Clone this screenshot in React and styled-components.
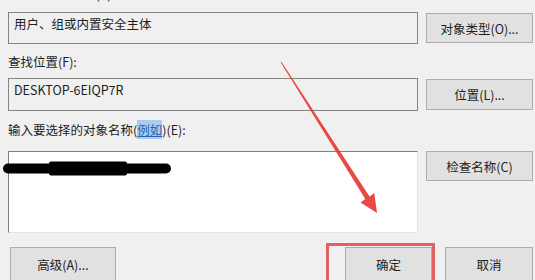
import React from "react";
import styled, { createGlobalStyle } from "styled-components";

const Global = createGlobalStyle`
  html, body { margin: 0; padding: 0; background: #f0f0f0; }
  body { width: 535px; height: 280px; overflow: hidden;
    font-family: "Noto Sans CJK SC", "Noto Sans", "Liberation Sans", sans-serif; }
`;

const Page = styled.div`
  position: relative;
  width: 535px;
  height: 280px;
  overflow: hidden;
  padding-left: 8px;
  box-sizing: border-box;
  color: #1e1e1e;
  font-size: 12.5px;
`;

const Label = styled.div`
  height: 16px;
  line-height: 16px;
  margin-top: ${(p) => p.$mt}px;
  white-space: nowrap;
`;

const Row = styled.div`
  display: grid;
  grid-template-columns: 410px 107px;
  column-gap: 8px;
  align-items: ${(p) => p.$align || "center"};
  margin-top: ${(p) => p.$mt}px;
`;

const Field = styled.div`
  box-sizing: border-box;
  height: ${(p) => p.$h}px;
  border: 1px solid #858585;
  background: #f0f0f0;
  padding: 3px 5px;
  line-height: 16px;
`;

const ListBox = styled.div`
  position: relative;
  box-sizing: border-box;
  height: 82px;
  background: #ffffff;
  border-top: 1px solid #808080;
  border-left: 1px solid #808080;
  border-right: 1px solid #e2e2e2;
  border-bottom: 1px solid #e2e2e2;
`;

const Button = styled.div`
  box-sizing: border-box;
  width: ${(p) => p.$w || 107}px;
  height: ${(p) => p.$h || 30}px;
  background: #e1e1e1;
  border: 1px solid #adadad;
  display: flex;
  align-items: ${(p) => (p.$top ? "flex-start" : "center")};
  padding-top: ${(p) => (p.$top ? 7 : 0)}px;
  justify-content: center;
  white-space: nowrap;
`;

const Link = styled.span`
  background: #a9cdee;
  color: #2a63b0;
  text-decoration: underline;
`;

const Footer = styled.div`
  display: flex;
  align-items: flex-start;
  margin-top: 14px;
  padding-left: 2px;
`;

const FooterRight = styled.div`
  margin-left: auto;
  display: flex;
  gap: 13px;
  padding-right: 2px;
`;

const Redaction = styled.svg`
  position: absolute;
  left: -8px;
  top: 9px;
`;

const Overlay = styled.svg`
  position: absolute;
  left: 0;
  top: 0;
  pointer-events: none;
`;

const Highlight = styled.div`
  position: absolute;
  left: 326px;
  top: 243px;
  width: 109px;
  height: 40px;
  box-sizing: border-box;
  border: 3px solid rgba(222, 70, 70, 0.85);
`;

export default function App() {
  return (
    <>
      <Global />
      <Page>
        <Label $mt={-14}>选择此对象类型(S):</Label>
        <Row $mt={10}>
          <Field $h={32}>用户、组或内置安全主体</Field>
          <Button>对象类型(O)...</Button>
        </Row>
        <Label $mt={10}>查找位置(F):</Label>
        <Row $mt={8}>
          <Field $h={33}>DESKTOP-6EIQP7R</Field>
          <Button $h={31}>位置(L)...</Button>
        </Row>
        <Label $mt={11}>
          输入要选择的对象名称(<Link>例如</Link>)(E):
        </Label>
        <Row $mt={13} $align="start">
          <ListBox>
            <Redaction width="172" height="18" viewBox="0 0 172 18">
              <rect x="2" y="2.5" width="168" height="10" rx="5" fill="#000" />
              <rect x="48" y="0.5" width="78" height="14" rx="2" fill="#000" />
            </Redaction>
          </ListBox>
          <Button>检查名称(C)</Button>
        </Row>
        <Footer>
          <Button $w={106} $h={34} $top>高级(A)...</Button>
          <FooterRight>
            <Button $w={87} $h={34} $top>确定</Button>
            <Button $w={88} $h={34} $top>取消</Button>
          </FooterRight>
        </Footer>
        <Overlay width="535" height="280" viewBox="0 0 535 280">
          <polygon
            points="281.4,61.7 280.6,62.3 365.3,199.1 360.5,202.5 377,213 374.3,193.1 369.5,196.5"
            fill="#e53935"
            opacity="0.92"
          />
        </Overlay>
        <Highlight />
      </Page>
    </>
  );
}
